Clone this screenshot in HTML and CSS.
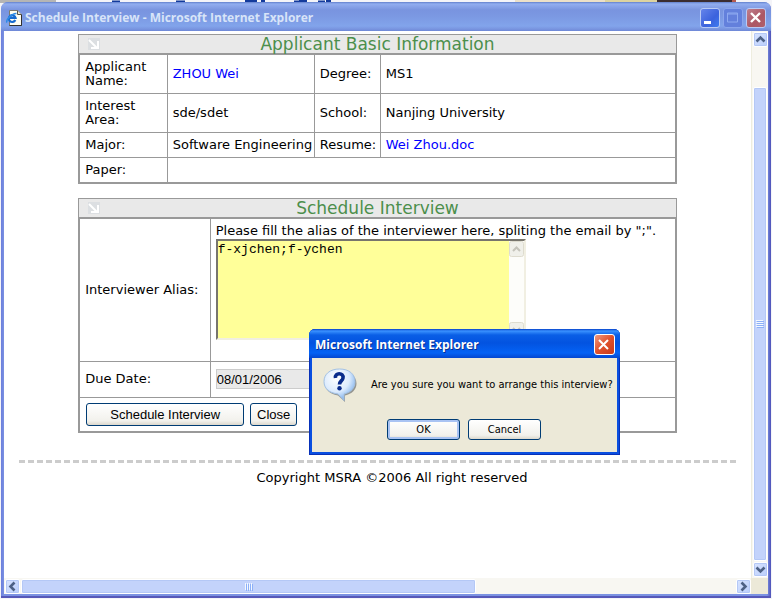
FILE: index.html
```html
<!DOCTYPE html>
<html lang="en">
<head>
<meta charset="utf-8">
<title>Schedule Interview - Microsoft Internet Explorer</title>
<link rel="stylesheet" href="styles.css">
</head>
<body>
<svg class="backdrop" width="100%" height="3" aria-hidden="true">
  <rect width="56" height="3" fill="#b5b5b5"/>
  <path d="M112 1.500h8M176 1.500h9M245 1h12M261 1h4M294 1.500h8M299 1h8M318 1.500h7M326 1h5" stroke="#133a9c" stroke-width="2"/>
  <rect x="515" width="90" height="3" fill="#ece0c8"/>
  <rect x="605" width="52" height="3" fill="#ddd3a0"/>
  <rect x="657" width="75" height="3" fill="#3b2d31"/>
  <rect x="732" width="4" height="3" fill="#b65a50"/>
</svg>
<div class="window">
  <header class="titlebar">
    <svg class="app-icon" width="16" height="16" viewBox="0 0 16 16" aria-hidden="true">
      <path d="M3.500.5h8l4 4v11h-12z" fill="#fffef2" stroke="#7d7a6c"/>
      <path d="M15.500 4.500v11h-12" fill="none" stroke="#303030"/>
      <path d="M11.500.5v4h4" fill="#e9e6d3" stroke="#55534a"/>
      <path d="M9.300 10A3.400 3.400 0 1 1 9.500 7.800H3.500" fill="none" stroke="#176bd0" stroke-width="2.200"/>
      <path d="M1 12.500C-.5 10 6 3 10.500 3.500" fill="none" stroke="#2d8be5" stroke-width="1.500"/>
    </svg>
    <h1 class="title">Schedule Interview - Microsoft Internet Explorer</h1>
    <div class="controls">
      <button class="control" aria-label="Minimize"><svg width="20" height="20"><path d="M4 14.500h7" stroke="#fff" stroke-width="3"/></svg></button>
      <button class="control control-dim" aria-label="Maximize" disabled><svg width="20" height="20"><path d="M4.500 5h10v9h-10zM4 6h11" fill="none" stroke="#8faaf0" stroke-width="1"/></svg></button>
      <button class="control control-close" aria-label="Close window"><svg width="20" height="20"><path d="M5 5l9 9M14 5l-9 9" stroke="#fff" stroke-width="2.400"/></svg></button>
    </div>
  </header>
  <main class="page">
    <section class="panel">
      <h2 class="panel-head"><svg class="arrow" width="12" height="12" aria-hidden="true"><rect width="12" height="12" fill="#dcdfe2"/><path d="M1 2l8 8M3 10h7.500M10 3v8" fill="none" stroke="#fff" stroke-width="2"/></svg>Applicant Basic Information</h2>
      <table class="grid">
        <colgroup><col class="col-name"><col class="col-value"><col class="col-key"><col></colgroup>
        <tr><th scope="row">Applicant Name:</th><td><a href="#">ZHOU Wei</a></td><th scope="row">Degree:</th><td>MS1</td></tr>
        <tr><th scope="row">Interest Area:</th><td>sde/sdet</td><th scope="row">School:</th><td>Nanjing University</td></tr>
        <tr><th scope="row">Major:</th><td>Software Engineering</td><th scope="row">Resume:</th><td><a href="#">Wei Zhou.doc</a></td></tr>
        <tr><th scope="row">Paper:</th><td colspan="3"></td></tr>
      </table>
    </section>
    <section class="panel">
      <h2 class="panel-head"><svg class="arrow" width="12" height="12" aria-hidden="true"><rect width="12" height="12" fill="#dcdfe2"/><path d="M1 2l8 8M3 10h7.500M10 3v8" fill="none" stroke="#fff" stroke-width="2"/></svg>Schedule Interview</h2>
      <table class="grid">
        <colgroup><col class="col-label"><col></colgroup>
        <tr class="row-alias"><th scope="row"><label for="alias">Interviewer Alias:</label></th>
          <td><p class="hint">Please fill the alias of the interviewer here, spliting the email by ";".</p>
            <div class="alias-box"><textarea id="alias" spellcheck="false">f-xjchen;f-ychen</textarea>
              <div class="mini-scroll" aria-hidden="true">
                <svg width="15" height="16"><rect x=".5" y=".5" width="14" height="15" rx="2" fill="#f0f0ea" stroke="#dedccf"/><path d="M4 10l3.500-3.500L11 10" fill="none" stroke="#c5c4bb" stroke-width="2"/></svg>
                <svg width="15" height="16"><rect x=".5" y=".5" width="14" height="15" rx="2" fill="#f0f0ea" stroke="#dedccf"/><path d="M4 6l3.500 3.500L11 6" fill="none" stroke="#c5c4bb" stroke-width="2"/></svg>
              </div></div></td></tr>
        <tr class="row-date"><th scope="row"><label for="due">Due Date:</label></th><td><input id="due" class="date" value="08/01/2006" readonly></td></tr>
        <tr><td colspan="2"><div class="actions"><button class="btn btn-wide">Schedule Interview</button><button class="btn">Close</button></div></td></tr>
      </table>
    </section>
    <svg class="rule" width="100%" height="3" aria-hidden="true"><line x1="0" y1="1.500" x2="100%" y2="1.500" stroke="#ccc" stroke-width="3" stroke-dasharray="6 3"/></svg>
    <p class="copyright">Copyright MSRA ©2006 All right reserved</p>
  </main>
  <div class="scroll scroll-v" aria-hidden="true">
    <div class="cap"><svg width="15" height="15"><path d="M3.500 9.500l4-4 4 4" fill="none" stroke="#4d6185" stroke-width="2.600"/></svg></div>
    <div class="thumb"><svg width="8" height="8"><path d="M0 .5h7M0 2.500h7M0 4.500h7M0 6.500h7" stroke="#f3f8ff"/><path d="M1 1.500h7M1 3.500h7M1 5.500h7M1 7.500h7" stroke="#8cb0f8"/></svg></div>
    <div class="cap"><svg width="15" height="15"><path d="M3.500 5.500l4 4 4-4" fill="none" stroke="#4d6185" stroke-width="2.600"/></svg></div>
  </div>
  <div class="scroll scroll-h" aria-hidden="true">
    <div class="cap"><svg width="15" height="15"><path d="M9.500 3.500l-4 4 4 4" fill="none" stroke="#4d6185" stroke-width="2.600"/></svg></div>
    <div class="thumb"><svg width="8" height="8"><path d="M.5 0v7M2.500 0v7M4.500 0v7M6.500 0v7" stroke="#f3f8ff"/><path d="M1.500 1v7M3.500 1v7M5.500 1v7M7.500 1v7" stroke="#8cb0f8"/></svg></div>
    <div class="cap"><svg width="15" height="15"><path d="M5.500 3.500l4 4-4 4" fill="none" stroke="#4d6185" stroke-width="2.600"/></svg></div>
  </div>
</div>
<div class="dialog" role="alertdialog" aria-labelledby="dialog-title" aria-describedby="dialog-text">
  <div class="dialog-bar">
    <h2 class="title" id="dialog-title">Microsoft Internet Explorer</h2>
    <button class="control control-red" aria-label="Close dialog"><svg width="20" height="20"><path d="M5 5l9 9M14 5l-9 9" stroke="#fff" stroke-width="2"/></svg></button>
  </div>
  <div class="dialog-body">
    <div class="message">
      <svg width="34" height="34" viewBox="0 0 34 34" aria-hidden="true">
        <defs><radialGradient id="bubble" cx="40%" cy="30%" r="70%"><stop offset="0" stop-color="#fff"/><stop offset=".6" stop-color="#dcebfd"/><stop offset="1" stop-color="#7fb1ec"/></radialGradient></defs>
        <path d="M17.500 3C27 3 33.500 8 33.500 15.500c0 6-4.500 10.500-11.500 12V34l-7-6.500C6 26 2 21 2 15 2 8 8 3 17.500 3z" fill="#77797a" opacity=".75"/>
        <path d="M16.500 1C26 1 32 6 32 13.500c0 6.500-4 11-11 12.500v6.500L15 26C6 25 1 20.500 1 13.500 1 6 7 1 16.500 1z" fill="url(#bubble)" stroke="#a3c1e4"/>
        <path d="M12.500 10C11.500 4 21 4.500 20 10c-.5 3-3.500 3-3.500 6.500" fill="none" stroke="#0a2c8c" stroke-width="3.600"/>
        <circle cx="16.500" cy="20.300" r="2.200" fill="#0a2c8c"/>
      </svg>
      <p id="dialog-text">Are you sure you want to arrange this interview?</p>
    </div>
    <div class="choices"><button class="btn choice choice-default">OK</button><button class="btn choice">Cancel</button></div>
  </div>
</div>
</body>
</html>
```
FILE: styles.css
```css
* { box-sizing: border-box; }
body {
  margin: 0;
  min-height: 100vh;
  overflow: hidden;
  background: #f4f4f8;
  font: 13px/14px "DejaVu Sans", Verdana, sans-serif;
  color: #000;
}
h1, h2, p { margin: 0; font-weight: normal; }
svg { display: block; }
a { color: #00f; text-decoration: none; }
button { padding: 0; }
.backdrop { position: absolute; top: 0; left: 0; }

.window {
  position: relative;
  display: grid;
  grid-template: 29px 1fr 16px / 1fr 17px;
  height: calc(100vh - 3px);
  margin: 2px 1px 1px;
  padding: 0 3px 4px;
  border-radius: 7px 7px 0 0;
  background: linear-gradient(90deg, #6b7edc, #7b92e2 3px, #7b92e2 calc(100% - 4px), #4e51b8);
  box-shadow: inset 0 -2px #5658b9;
}
.titlebar {
  grid-column: 1 / -1;
  display: flex;
  align-items: center;
  gap: 3px;
  margin: 0 -3px;
  padding: 2px 5px 0;
  border-radius: 7px 7px 0 0;
  background: linear-gradient(#6380cc, #91aef0 2px, #8aa5ea 4px, #7994df 8px, #7b98e2 14px, #82a4eb 24px, #7995e0 27px, #6e87d6);
}
.title {
  flex: 1;
  font: bold 12px/16px "Open Sans", "Trebuchet MS", sans-serif;
  color: #d8e4f8;
}
.controls { display: flex; gap: 3px; }
.control {
  width: 20px;
  height: 20px;
  border: 1px solid #b9caf5;
  border-radius: 3px;
  background: linear-gradient(135deg, #6584ea, #3b62dd 60%, #3e7bf0);
}
.control svg { margin: -1px; }
.control-dim { border-color: #8ba5ec; background: #6380dc; }
.control-close { background: linear-gradient(135deg, #bf7f8c, #ac5765 60%, #b0606c); }
.control-red { border-color: #fff; background: linear-gradient(135deg, #ee9a80, #e0512c 50%, #c8391a); }

.page { background: #fff; padding-top: 3px; overflow: hidden; }
.panel { width: calc(80% + 1px); margin: 0 auto 14px; }
.panel-head {
  display: grid;
  grid-template-columns: 20px 1fr 20px;
  align-items: center;
  height: 19px;
  border: 1px solid #999;
  border-bottom: 0;
  background: #e9e9e9;
  font-size: 17px;
  line-height: 18px;
  text-align: center;
  color: #4c8f4c;
}
.arrow { margin-left: 9px; }
.grid {
  width: 100%;
  border: 2px solid #999;
  border-collapse: collapse;
  table-layout: fixed;
}
.grid th, .grid td {
  height: 25px;
  padding: 5px;
  border: 1px solid #999;
  font-weight: normal;
  text-align: left;
}
.grid td { white-space: nowrap; }
.col-name { width: 88px; }
.col-value { width: 147px; }
.col-key { width: 66px; }
.col-label { width: 131px; }
.grid .row-alias td { height: 143px; vertical-align: top; }
.grid .row-date td { height: 36px; padding-top: 0; padding-bottom: 0; }
.hint { margin-bottom: 1px; }
.alias-box {
  display: flex;
  width: 310px;
  height: 101px;
  border: 2px solid;
  border-color: #77756d #f1efe2 #f1efe2 #77756d;
  background: #ff9;
}
textarea {
  flex: 1;
  padding: 1px 0;
  border: 0;
  resize: none;
  overflow: hidden;
  background: none;
  font: 13px/15px "Liberation Mono", "Courier New", monospace;
}
.mini-scroll {
  display: flex;
  flex-direction: column;
  justify-content: space-between;
  background: #fdfdfa;
}
.date {
  display: block;
  width: 160px;
  height: 20px;
  padding: 0;
  border: 1px solid #ccc;
  background: #e9e9e9;
  font: 13px/15px "Liberation Sans", Arial, sans-serif;
}
.actions { display: flex; gap: 6px; padding-left: 1px; }
.btn {
  width: 47px;
  height: 23px;
  border: 1px solid #003c74;
  border-radius: 3px;
  background: linear-gradient(#fff, #f2f1ec 80%, #dcd8cd);
  font: 13px/15px "Liberation Sans", Arial, sans-serif;
  color: #000;
}
.btn-wide { width: 158px; }
.rule { width: 96%; margin: 27px auto 8px; }
.copyright { padding-left: 29px; text-align: center; }

.scroll { display: flex; background: #f8f7f2; gap: 1px; }
.scroll-v { flex-direction: column; padding: 1px; border-left: 1px solid #eeeddf; }
.scroll-h { padding: 1px 0 0 1px; box-shadow: 17px 0 #ece9d8; }
.cap, .thumb {
  border: 1px solid #fff;
  border-radius: 2px;
  box-shadow: inset 0 0 0 1px #b4c8f6;
  background: linear-gradient(135deg, #d8e4ff, #b9cdfb);
}
.cap { flex: none; width: 15px; height: 15px; }
.cap svg { margin: -1px; }
.thumb { display: flex; align-items: center; justify-content: center; background: #c3d3fb; }
.scroll-v .thumb { flex: 1; margin-top: 39px; }
.scroll-h .thumb { width: 61%; margin-right: auto; }

.dialog {
  position: absolute;
  top: 329px;
  left: 309px;
  width: 311px;
  height: 126px;
  display: flex;
  flex-direction: column;
  padding: 0 3px 3px;
  border-radius: 6px 6px 0 0;
  background: #0a4fe0;
  box-shadow: inset 0 0 0 1px #0831b8;
}
.dialog-bar {
  display: flex;
  align-items: center;
  height: 29px;
  margin: 0 -3px;
  padding: 2px 5px 0 6px;
  border-radius: 6px 6px 0 0;
  background: linear-gradient(#0540c8, #3a92ff 2px, #0a5fe6 6px, #0353e0 14px, #0462f5 24px, #0446cf);
}
.dialog .title { color: #fff; text-shadow: 1px 1px #0a3190; }
.dialog-bar .control { width: 21px; height: 21px; }
.dialog-body {
  flex: 1;
  padding: 10px 0 0 11px;
  background: #ece9d8;
  font: 11px/14px "DejaVu Sans Condensed", Tahoma, sans-serif;
}
.message { display: flex; align-items: center; gap: 14px; white-space: nowrap; }
.choices { display: flex; gap: 8px; margin: 17px 0 0 64px; }
.choice { width: 73px; height: 21px; font: inherit; }
.choice-default { box-shadow: inset 0 0 0 2px #a9c3f3; }
```
